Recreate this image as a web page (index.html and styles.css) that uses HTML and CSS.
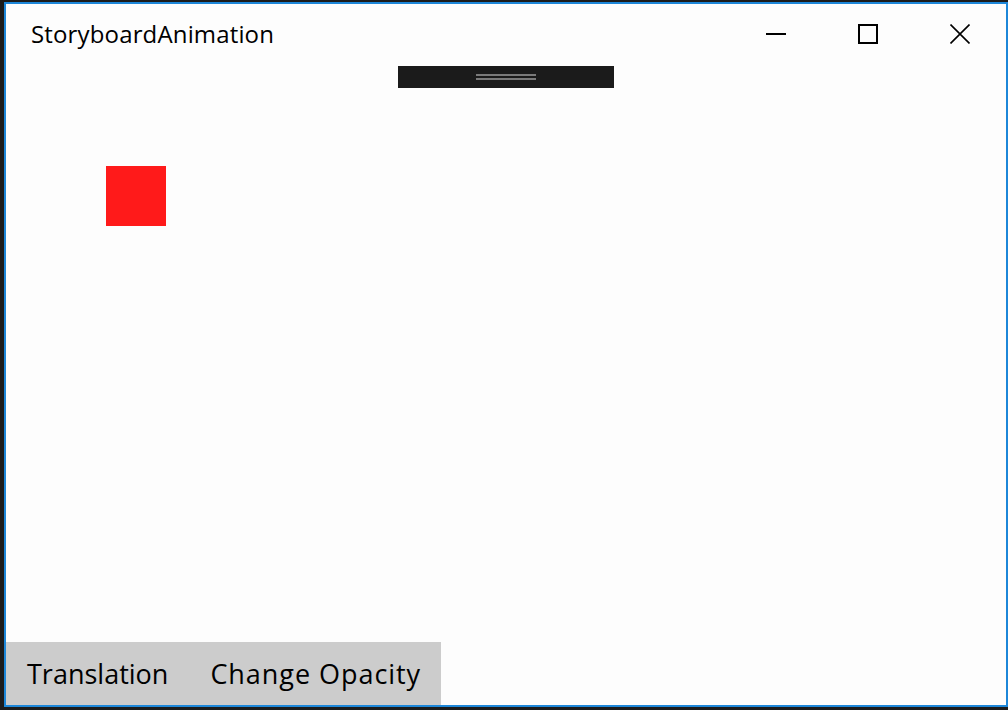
FILE: index.html
```html
<!DOCTYPE html>
<html>
<head>
<meta charset="utf-8">
<link rel="stylesheet" href="styles.css">
</head>
<body>
<div class="window">
  <div class="titlebar">
    <div class="title">StoryboardAnimation</div>
    <div class="caption-buttons">
      <div class="cap-btn">
        <svg width="20" height="20" viewBox="0 0 20 20"><path d="M0 10h20" stroke="#000" stroke-width="2" fill="none"/></svg>
      </div>
      <div class="cap-btn">
        <svg width="20" height="20" viewBox="0 0 20 20"><rect x="1" y="1" width="18" height="18" stroke="#000" stroke-width="2" fill="none"/></svg>
      </div>
      <div class="cap-btn">
        <svg width="20" height="20" viewBox="0 0 20 20"><path d="M0.5 0.5L19.5 19.5M19.5 0.5L0.5 19.5" stroke="#000" stroke-width="1.6" fill="none"/></svg>
      </div>
    </div>
  </div>
  <div class="content">
    <div class="red-box"></div>
  </div>
  <div class="button-bar">
    <div class="btn">Translation</div>
    <div class="btn btn-wide">Change Opacity</div>
  </div>
  <div class="debug-toolbar">
    <div class="grip"></div>
  </div>
</div>
</body>
</html>
```

FILE: styles.css
```css
html, body {
  margin: 0;
  padding: 0;
  width: 1008px;
  height: 710px;
  overflow: hidden;
  background: #1c1c1c;
}

.window {
  position: relative;
  box-sizing: border-box;
  margin: 2px 0 0 4px;
  width: 1004px;
  height: 705px;
  border: 2px solid #1d87d9;
  background: #fdfdfd;
  display: flex;
  flex-direction: column;
  font-family: "Open Sans", "Noto Sans", sans-serif;
  color: #000;
}

.titlebar {
  height: 60px;
  display: flex;
  align-items: center;
  justify-content: space-between;
  flex-shrink: 0;
}

.title {
  padding-left: 25px;
  font-size: 24px;
  letter-spacing: 0.15px;
  line-height: 1;
}

.caption-buttons {
  display: flex;
  height: 100%;
}

.cap-btn {
  width: 92px;
  height: 100%;
  display: flex;
  align-items: center;
  justify-content: center;
}

.cap-btn svg {
  display: block;
}

.content {
  flex: 1;
  padding: 102px 0 0 100px;
}

.red-box {
  width: 60px;
  height: 60px;
  background: #ff1a1a;
}

.button-bar {
  display: flex;
  align-self: flex-start;
  height: 63px;
  background: #cccccc;
  flex-shrink: 0;
}

.btn {
  display: flex;
  align-items: center;
  padding: 0 21px;
  font-size: 27px;
}

.btn-wide {
  letter-spacing: 0.95px;
  padding-right: 20px;
}

.debug-toolbar {
  position: absolute;
  left: 392px;
  top: 62px;
  width: 216px;
  height: 22px;
  background: #1b1b1b;
  display: flex;
  align-items: center;
  justify-content: center;
}

.grip {
  width: 60px;
  height: 2px;
  border-top: 2px solid #7a7a7a;
  border-bottom: 2px solid #7a7a7a;
}
```
